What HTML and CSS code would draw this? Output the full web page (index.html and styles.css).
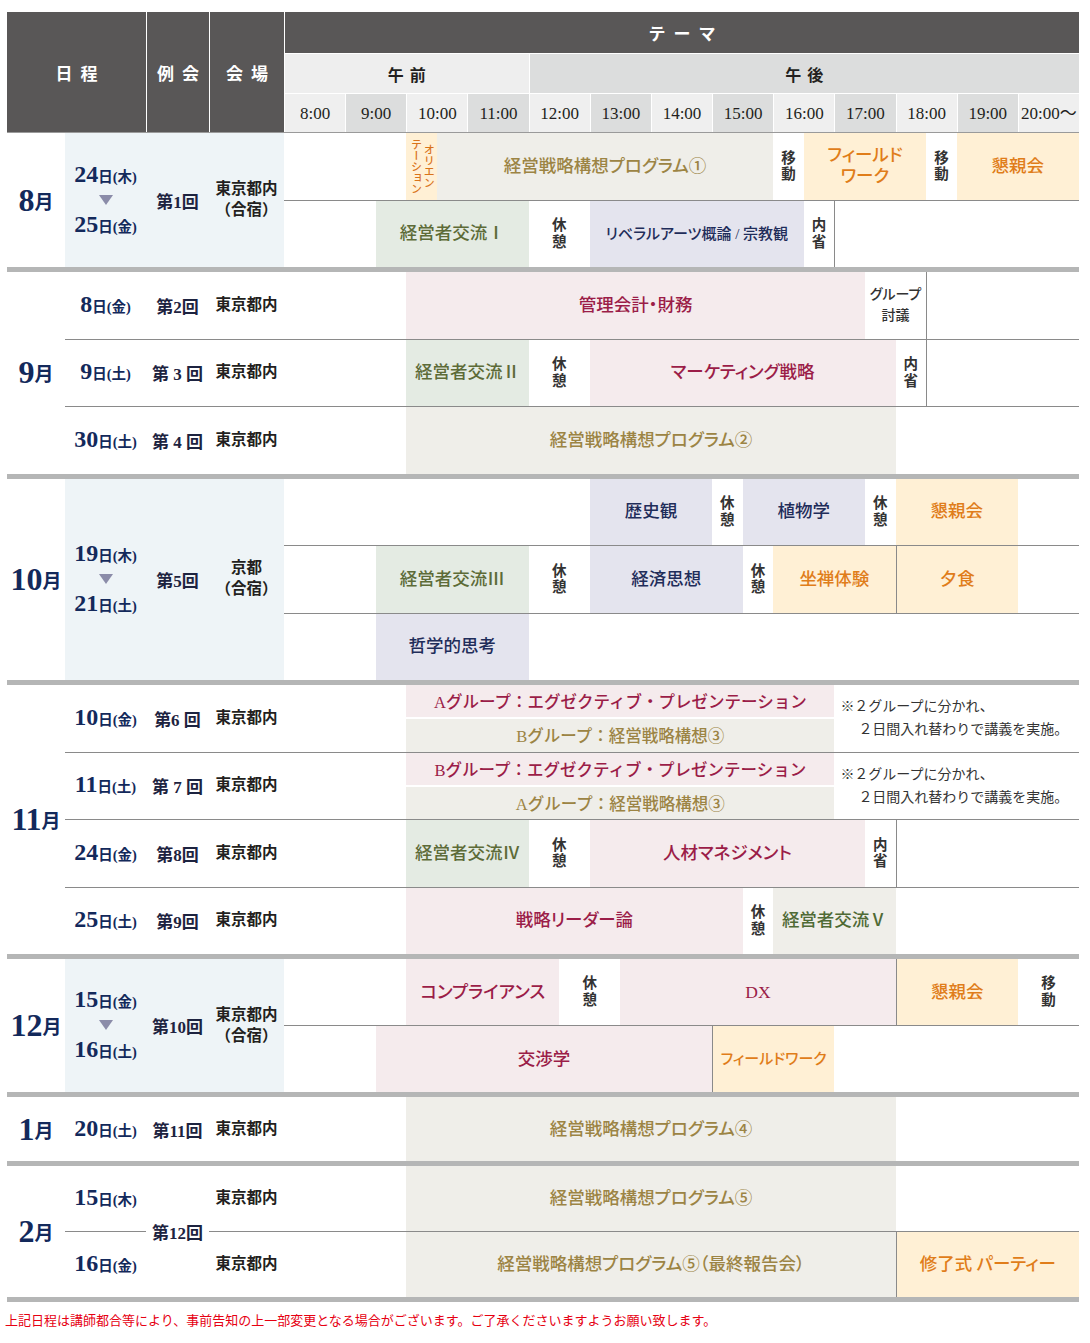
FILE: index.html
```html
<!DOCTYPE html>
<html lang="ja">
<head>
<meta charset="utf-8">
<title>年間スケジュール</title>
<link rel="stylesheet" href="styles.css">
</head>
<body>
<div class="page">
  <div class="grid head">
    <div class="hd h-date">日程</div>
    <div class="hd h-rk">例会</div>
    <div class="hd h-vn">会場</div>
    <div class="hd h-theme">テーマ</div>
    <div class="h-am">午前</div>
    <div class="h-pm">午後</div>
    <div class="tm">8:00</div>
    <div class="tm dk">9:00</div>
    <div class="tm">10:00</div>
    <div class="tm dk">11:00</div>
    <div class="tm">12:00</div>
    <div class="tm dk">13:00</div>
    <div class="tm">14:00</div>
    <div class="tm dk">15:00</div>
    <div class="tm">16:00</div>
    <div class="tm dk">17:00</div>
    <div class="tm">18:00</div>
    <div class="tm dk">19:00</div>
    <div class="tm">20:00～</div>
  </div>

  <!-- 8月 -->
  <section class="grid month first r2">
    <div class="mo all"><b>8</b><span>月</span></div>
    <div class="dt blue all"><div><span class="dn">24</span><span class="dd">日(木)</span></div><i class="tri"></i><div><span class="dn">25</span><span class="dd">日(金)</span></div></div>
    <div class="rk blue all">第1回</div>
    <div class="vn blue all">東京都内<br>（合宿）</div>
    <div class="row row-1">
      <div class="c" style="--n:4"></div>
      <div class="c orange orient"><span>オリエン<br>テーション</span></div>
      <div class="c beige" style="--n:11">経営戦略構想プログラム①</div>
      <div class="c brk">移<br>動</div>
      <div class="c orange" style="--n:4">フィールド<br>ワーク</div>
      <div class="c brk">移<br>動</div>
      <div class="c orange" style="--n:4">懇親会</div>
    </div>
    <div class="row row-2">
      <div class="c" style="--n:3"></div>
      <div class="c green" style="--n:5">経営者交流Ⅰ</div>
      <div class="c brk" style="--n:2">休<br>憩</div>
      <div class="c lav small" style="--n:7">リベラルアーツ概論 / 宗教観</div>
      <div class="c brk">内<br>省</div>
      <div class="c vl" style="--n:8"></div>
    </div>
  </section>

  <!-- 9月 -->
  <section class="grid month r3">
    <div class="mo all"><b>9</b><span>月</span></div>
    <div class="row row-1">
      <div class="dt"><div><span class="dn">8</span><span class="dd">日(金)</span></div></div>
      <div class="rk">第2回</div>
      <div class="vn">東京都内</div>
      <div class="c" style="--n:4"></div>
      <div class="c pink" style="--n:15">管理会計・財務</div>
      <div class="c brk gd" style="--n:2">グループ<br>討議</div>
      <div class="c vl" style="--n:5"></div>
    </div>
    <div class="row row-2">
      <div class="dt"><div><span class="dn">9</span><span class="dd">日(土)</span></div></div>
      <div class="rk">第 3 回</div>
      <div class="vn">東京都内</div>
      <div class="c" style="--n:4"></div>
      <div class="c green" style="--n:4">経営者交流Ⅱ</div>
      <div class="c brk" style="--n:2">休<br>憩</div>
      <div class="c pink" style="--n:10">マーケティング戦略</div>
      <div class="c brk">内<br>省</div>
      <div class="c vl" style="--n:5"></div>
    </div>
    <div class="row row-3">
      <div class="dt"><div><span class="dn">30</span><span class="dd">日(土)</span></div></div>
      <div class="rk">第 4 回</div>
      <div class="vn">東京都内</div>
      <div class="c" style="--n:4"></div>
      <div class="c beige" style="--n:16">経営戦略構想プログラム②</div>
      <div class="c" style="--n:6"></div>
    </div>
  </section>

  <!-- 10月 -->
  <section class="grid month r3">
    <div class="mo all"><b>10</b><span>月</span></div>
    <div class="dt blue all"><div><span class="dn">19</span><span class="dd">日(木)</span></div><i class="tri"></i><div><span class="dn">21</span><span class="dd">日(土)</span></div></div>
    <div class="rk blue all">第5回</div>
    <div class="vn blue all">京都<br>（合宿）</div>
    <div class="row row-1">
      <div class="c" style="--n:10"></div>
      <div class="c lav" style="--n:4">歴史観</div>
      <div class="c brk">休<br>憩</div>
      <div class="c lav" style="--n:4">植物学</div>
      <div class="c brk">休<br>憩</div>
      <div class="c orange" style="--n:4">懇親会</div>
      <div class="c" style="--n:2"></div>
    </div>
    <div class="row row-2">
      <div class="c" style="--n:3"></div>
      <div class="c green" style="--n:5">経営者交流Ⅲ</div>
      <div class="c brk" style="--n:2">休<br>憩</div>
      <div class="c lav" style="--n:5">経済思想</div>
      <div class="c brk">休<br>憩</div>
      <div class="c orange" style="--n:4">坐禅体験</div>
      <div class="c orange vl" style="--n:4">夕食</div>
      <div class="c" style="--n:2"></div>
    </div>
    <div class="row row-3">
      <div class="c" style="--n:3"></div>
      <div class="c lav" style="--n:5">哲学的思考</div>
      <div class="c" style="--n:18"></div>
    </div>
  </section>

  <!-- 11月 -->
  <section class="grid month r4">
    <div class="mo all"><b>11</b><span>月</span></div>
    <div class="row row-1">
      <div class="dt"><div><span class="dn">10</span><span class="dd">日(金)</span></div></div>
      <div class="rk">第6 回</div>
      <div class="vn">東京都内</div>
      <div class="c" style="--n:4"></div>
      <div class="split" style="--n:14">
        <div class="pink">Aグループ：エグゼクティブ・プレゼンテーション</div>
        <div class="beige">Bグループ：経営戦略構想③</div>
      </div>
      <div class="c note" style="--n:8"><div><p>※２グループに分かれ、</p><p class="ind">２日間入れ替わりで講義を実施。</p></div></div>
    </div>
    <div class="row row-2">
      <div class="dt"><div><span class="dn">11</span><span class="dd">日(土)</span></div></div>
      <div class="rk">第 7 回</div>
      <div class="vn">東京都内</div>
      <div class="c" style="--n:4"></div>
      <div class="split" style="--n:14">
        <div class="pink">Bグループ：エグゼクティブ・プレゼンテーション</div>
        <div class="beige">Aグループ：経営戦略構想③</div>
      </div>
      <div class="c note" style="--n:8"><div><p>※２グループに分かれ、</p><p class="ind">２日間入れ替わりで講義を実施。</p></div></div>
    </div>
    <div class="row row-3">
      <div class="dt"><div><span class="dn">24</span><span class="dd">日(金)</span></div></div>
      <div class="rk">第8回</div>
      <div class="vn">東京都内</div>
      <div class="c" style="--n:4"></div>
      <div class="c green" style="--n:4">経営者交流Ⅳ</div>
      <div class="c brk" style="--n:2">休<br>憩</div>
      <div class="c pink" style="--n:9">人材マネジメント</div>
      <div class="c brk">内<br>省</div>
      <div class="c vl" style="--n:6"></div>
    </div>
    <div class="row row-4">
      <div class="dt"><div><span class="dn">25</span><span class="dd">日(土)</span></div></div>
      <div class="rk">第9回</div>
      <div class="vn">東京都内</div>
      <div class="c" style="--n:4"></div>
      <div class="c pink" style="--n:11">戦略リーダー論</div>
      <div class="c brk">休<br>憩</div>
      <div class="c beige gtext" style="--n:4">経営者交流Ⅴ</div>
      <div class="c" style="--n:6"></div>
    </div>
  </section>

  <!-- 12月 -->
  <section class="grid month r2s">
    <div class="mo all"><b>12</b><span>月</span></div>
    <div class="dt blue all"><div><span class="dn">15</span><span class="dd">日(金)</span></div><i class="tri"></i><div><span class="dn">16</span><span class="dd">日(土)</span></div></div>
    <div class="rk blue all">第10回</div>
    <div class="vn blue all">東京都内<br>（合宿）</div>
    <div class="row row-1">
      <div class="c" style="--n:4"></div>
      <div class="c pink" style="--n:5">コンプライアンス</div>
      <div class="c brk" style="--n:2">休<br>憩</div>
      <div class="c pink" style="--n:9">DX</div>
      <div class="c orange vl" style="--n:4">懇親会</div>
      <div class="c brk" style="--n:2">移<br>動</div>
    </div>
    <div class="row row-2">
      <div class="c" style="--n:3"></div>
      <div class="c pink" style="--n:11">交渉学</div>
      <div class="c orange vl fw" style="--n:4">フィールドワーク</div>
      <div class="c" style="--n:8"></div>
    </div>
  </section>

  <!-- 1月 -->
  <section class="grid month r1">
    <div class="mo all"><b>1</b><span>月</span></div>
    <div class="row row-1">
      <div class="dt"><div><span class="dn">20</span><span class="dd">日(土)</span></div></div>
      <div class="rk">第11回</div>
      <div class="vn">東京都内</div>
      <div class="c" style="--n:4"></div>
      <div class="c beige" style="--n:16">経営戦略構想プログラム④</div>
      <div class="c" style="--n:6"></div>
    </div>
  </section>

  <!-- 2月 -->
  <section class="grid month last r2f">
    <div class="mo all"><b>2</b><span>月</span></div>
    <div class="rk all">第12回</div>
    <div class="row row-1">
      <div class="dt"><div><span class="dn">15</span><span class="dd">日(木)</span></div></div>
      <div class="vn">東京都内</div>
      <div class="c" style="--n:4"></div>
      <div class="c beige" style="--n:16">経営戦略構想プログラム⑤</div>
      <div class="c" style="--n:6"></div>
    </div>
    <div class="row row-2">
      <div class="dt"><div><span class="dn">16</span><span class="dd">日(金)</span></div></div>
      <div class="vn">東京都内</div>
      <div class="c" style="--n:4"></div>
      <div class="c beige" style="--n:16">経営戦略構想プログラム⑤（最終報告会）</div>
      <div class="c orange vl" style="--n:6">修了式 パーティー</div>
    </div>
  </section>

  <p class="foot">上記日程は講師都合等により、事前告知の上一部変更となる場合がございます。ご了承くださいますようお願い致します。</p>
</div>
</body>
</html>
```

FILE: styles.css
```css
* { box-sizing: border-box; margin: 0; padding: 0; }
html, body { background: #fff; }
body {
  font-family: "Liberation Serif", "Noto Sans CJK JP", serif;
  color: #231f20;
}
.page { padding: 12px 0 0 7px; width: 1090px; }

.grid {
  display: grid;
  grid-template-columns: 58px 81px 63px 75px repeat(26, minmax(0, 1fr));
  width: 1072px;
}

/* ---------- header ---------- */
.head {
  grid-template-rows: 41px 40px 39px;
  border-bottom: 1px solid #9a9a9a;
}
.hd {
  background: #595757;
  color: #fff;
  font-weight: 700;
  font-size: 17px;
  letter-spacing: 8px;
  padding-left: 8px;
  display: flex;
  align-items: center;
  justify-content: center;
}
.h-date { grid-column: 1 / 3; grid-row: 1 / 4; }
.h-rk { grid-column: 3 / 4; grid-row: 1 / 4; border-left: 1px solid #fff; }
.h-vn { grid-column: 4 / 5; grid-row: 1 / 4; border-left: 1px solid #fff; }
.h-theme { grid-column: 5 / 31; grid-row: 1; border-left: 1px solid #fff; }
.h-am, .h-pm {
  grid-row: 2;
  display: flex;
  align-items: center;
  justify-content: center;
  font-size: 16px;
  font-weight: 700;
  letter-spacing: 6px;
  padding-left: 6px;
  border-left: 1px solid #fff;
  border-top: 1px solid #fff;
  color: #231f20;
}
.h-am { grid-column: 5 / 13; background: #eeeeee; }
.h-pm { grid-column: 13 / 31; background: #dcdddd; }
.tm {
  grid-row: 3;
  grid-column: span 2;
  background: #efefef;
  border-left: 1px solid #fff;
  border-top: 1px solid #fff;
  display: flex;
  align-items: center;
  justify-content: center;
  font-size: 17px;
  line-height: 1;
  white-space: nowrap;
  color: #231f20;
}
.tm.dk { background: #dcdddd; }

/* ---------- month blocks ---------- */
.month {
  background: #8a8a8a;
  row-gap: 1px;
  border-top: 5px solid #b5b6b6;
}
.month.first { border-top: 0; }
.month.last { border-bottom: 5px solid #b5b6b6; }
.r1 { grid-template-rows: 64px; }
.r2 { grid-template-rows: repeat(2, 66.5px); }
.r2s { grid-template-rows: repeat(2, 66px); }
.r2f { grid-template-rows: repeat(2, 65px); }
.r3 { grid-template-rows: repeat(3, 66.5px); }
.r4 { grid-template-rows: repeat(4, 66.5px); }

.row { display: contents; }
.row-1 > * { grid-row: 1; }
.row-2 > * { grid-row: 2; }
.row-3 > * { grid-row: 3; }
.row-4 > * { grid-row: 4; }
.all { grid-row: 1 / -1; }

.mo, .dt, .rk, .vn {
  background: #fff;
  display: flex;
  align-items: center;
  justify-content: center;
  text-align: center;
  font-weight: 700;
}
.mo { grid-column: 1; color: #13295b; }
.mo b { font-size: 32px; font-weight: 700; }
.mo span { font-size: 19px; }

.dt { grid-column: 2; color: #13295b; flex-direction: column; white-space: nowrap; }
.dt > div { line-height: 24px; }
.dn { font-size: 24px; }
.dd { font-size: 14.5px; }
.tri {
  display: block;
  width: 0;
  height: 0;
  border-left: 7px solid transparent;
  border-right: 7px solid transparent;
  border-top: 10px solid #8b8ca9;
  margin: 6px 0 7px;
}

.rk { grid-column: 3; font-size: 17px; color: #1d2340; white-space: nowrap; }
.vn { grid-column: 4; font-size: 15.5px; line-height: 1.35; color: #231f20; }
.blue { background: #eef4f7; }

/* ---------- time cells ---------- */
.c {
  grid-column: span var(--n, 1);
  background: #fff;
  display: flex;
  align-items: center;
  justify-content: center;
  text-align: center;
  font-size: 17.5px;
  font-weight: 500;
  line-height: 1.2;
  white-space: nowrap;
  font-feature-settings: "palt";
}
.vl { border-left: 1px solid #8a8a8a; }

.beige { background: #efeee9; color: #9c8444; }
.pink { background: #f5ebed; color: #9b1d48; }
.green { background: #e4ebe3; color: #5d6b38; }
.lav { background: #e4e4ee; color: #1f2d5a; }
.orange { background: #fff0d5; color: #e07d1a; }
.gtext { color: #4f6a35; }
.small { font-size: 15px; }
.fw { font-size: 15px; }

.brk {
  font-size: 14.5px;
  font-weight: 700;
  color: #333;
  line-height: 1.15;
}
.gd { font-size: 14px; font-weight: 500; line-height: 1.5; }

.orient > span {
  writing-mode: vertical-rl;
  font-size: 11px;
  line-height: 1.15;
  color: #d9731a;
  font-weight: 500;
}

.split {
  grid-column: span var(--n, 1);
  background: #fff;
  display: flex;
  flex-direction: column;
  gap: 2px;
}
.split > div {
  flex: 1;
  display: flex;
  align-items: center;
  justify-content: center;
  font-size: 16.5px;
  font-weight: 500;
  white-space: nowrap;
}
.note {
  justify-content: flex-start;
  text-align: left;
  font-size: 14px;
  font-weight: 400;
  color: #333;
  padding-left: 6px;
  line-height: 23px;
  font-feature-settings: normal;
}
.note .ind { padding-left: 18px; }

.foot {
  margin: 8px 0 0 -2px;
  color: #e60012;
  font-size: 13px;
  font-family: "Noto Sans CJK JP", sans-serif;
  white-space: nowrap;
}
```
